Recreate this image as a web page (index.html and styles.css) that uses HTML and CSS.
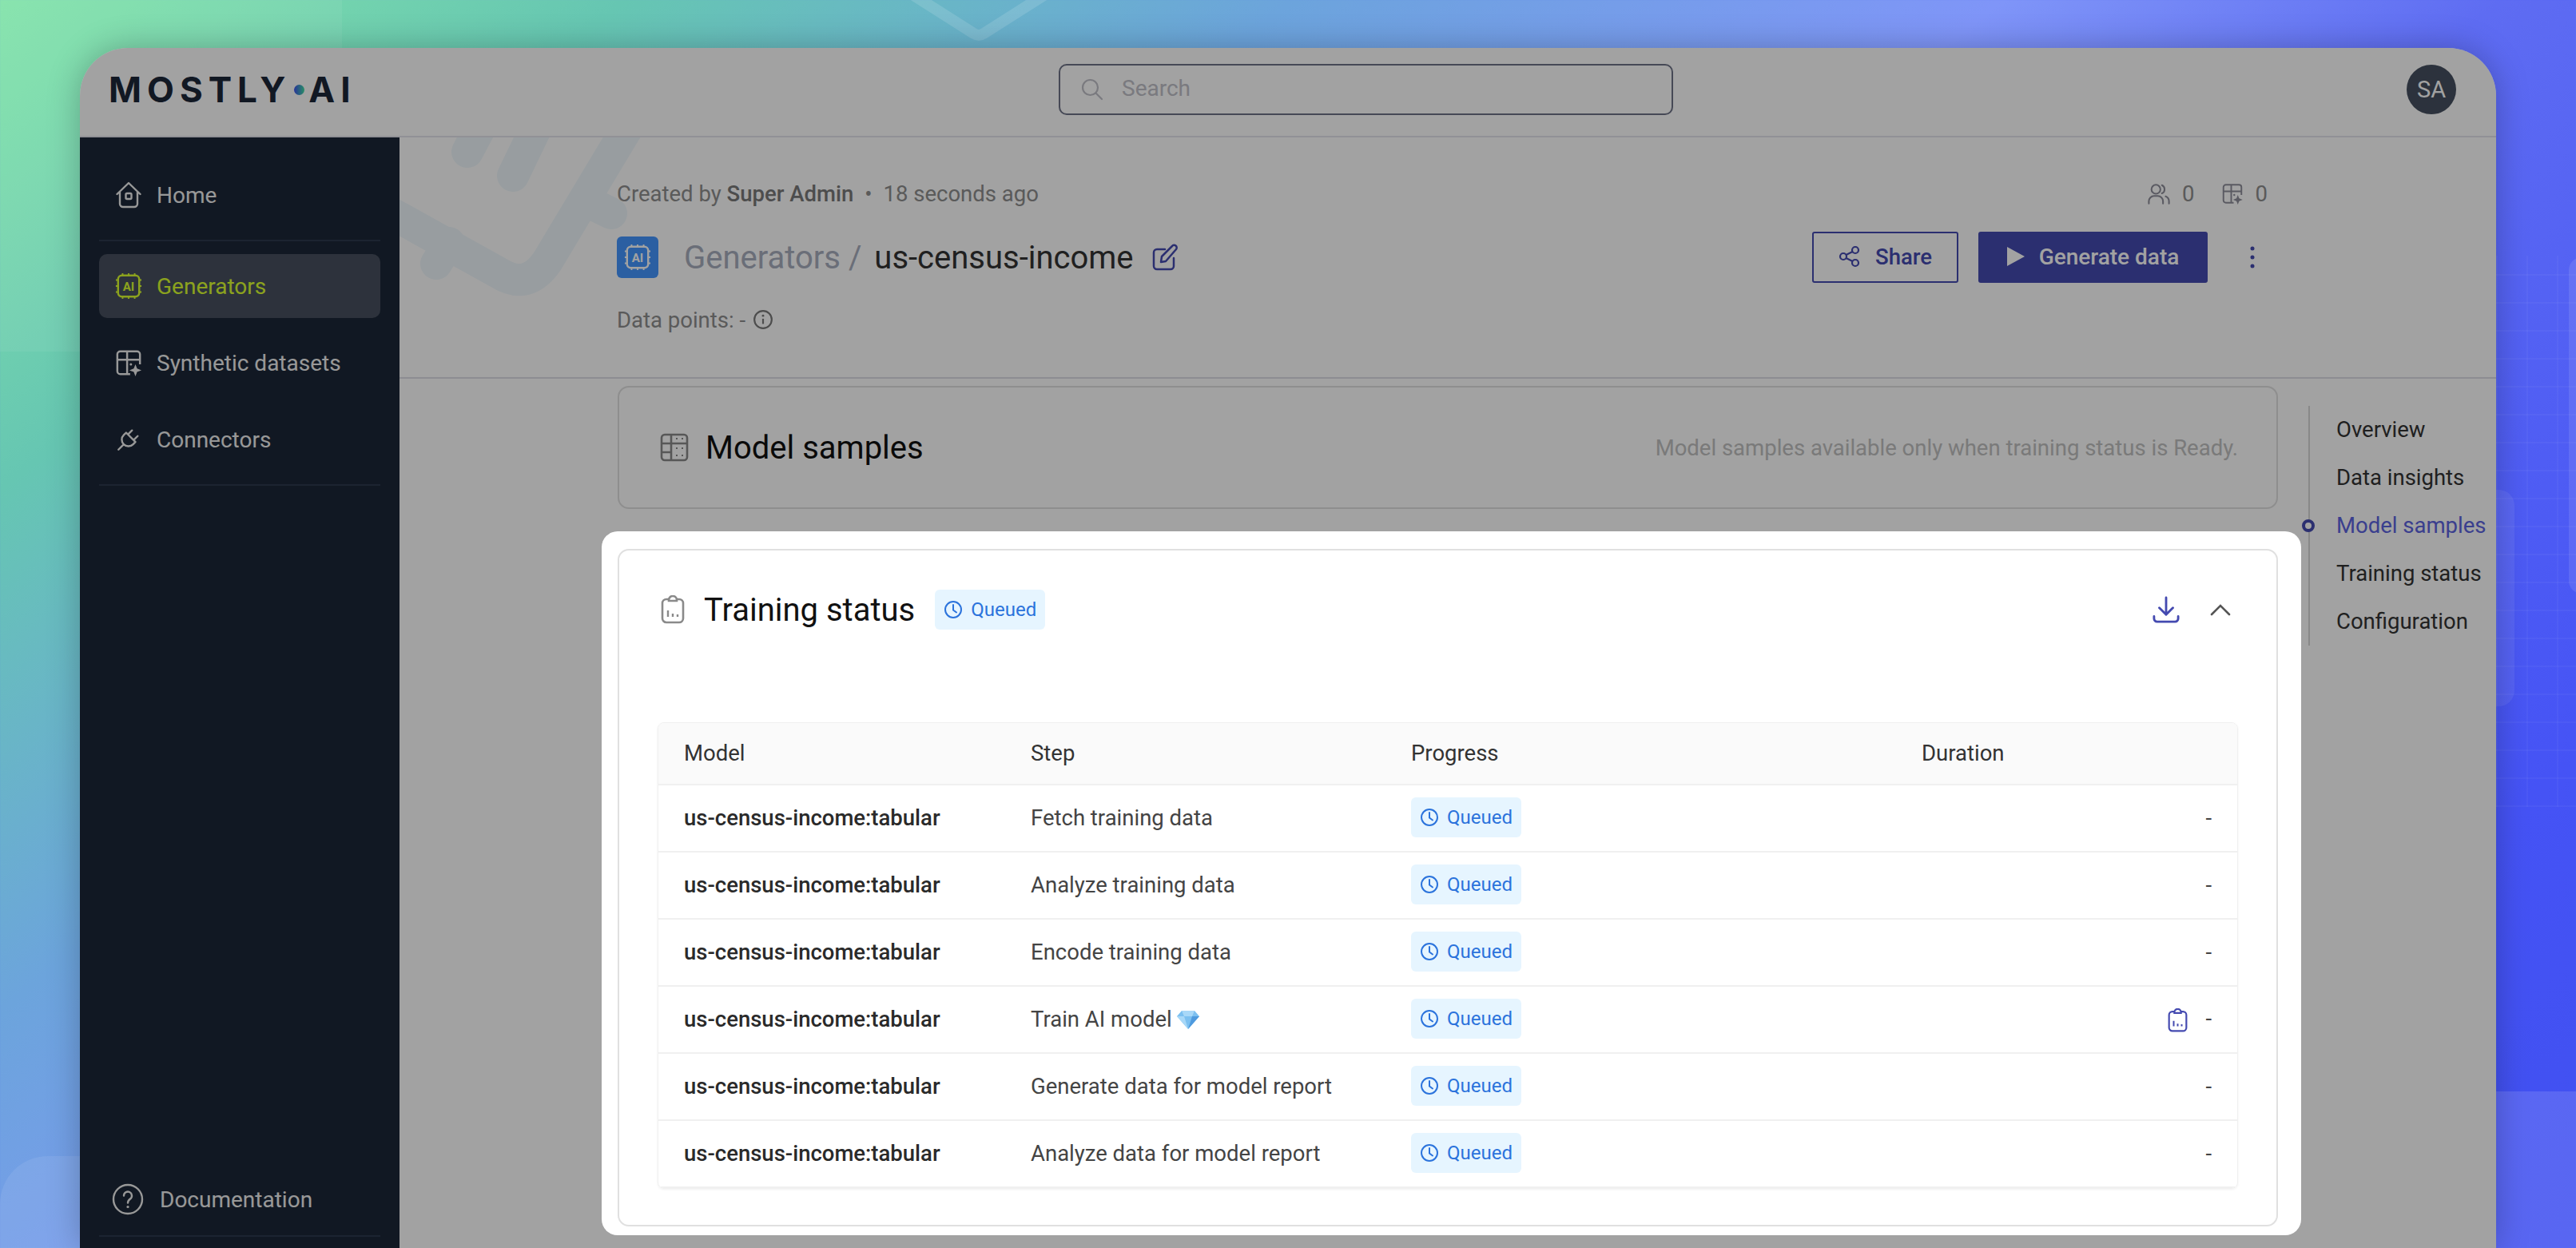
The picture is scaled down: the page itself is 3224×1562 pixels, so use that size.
FILE: index.html
```html
<!DOCTYPE html>
<html lang="en">
<head>
  <meta charset="UTF-8">
  <title>us-census-income - MOSTLY AI</title>
  <link rel="stylesheet" href="styles.css">
</head>
<body>
<!-- shared icons -->
<svg class="icon-defs" width="0" height="0">
  <symbol id="i-home" viewBox="0 0 34 34"><path d="M2.500 16 17 2l14.500 14M6 13.500V28a4 4 0 0 0 4 4h14a4 4 0 0 0 4-4V13.500" fill="none" stroke="currentColor" stroke-width="2.400" stroke-linecap="round" stroke-linejoin="round"/><rect x="13.500" y="15" width="7" height="7" rx="1.500" fill="none" stroke="currentColor" stroke-width="2.400"/></symbol>
  <symbol id="i-table-star" viewBox="0 0 36 36"><path d="M20 33H7a4 4 0 0 1-4-4V7a4 4 0 0 1 4-4h22a4 4 0 0 1 4 4v13M3 14h30M16 3v30" fill="none" stroke="currentColor" stroke-width="2.600"/><path d="M27 20l2.200 5.800L35 28l-5.800 2.200L27 36l-2.200-5.800L19 28l5.800-2.200z" fill="currentColor"/><circle cx="21" cy="20" r="1.600" fill="currentColor"/></symbol>
  <symbol id="i-plug" viewBox="0 0 24 24"><path d="M9.785 6 18 14.215l-2.054 2.054a5.810 5.810 0 1 1-8.215-8.215zM3 21l4.500-4.500M15 4l-3.500 3.500M20 9l-3.500 3.500" fill="none" stroke="currentColor" stroke-width="1.700" stroke-linecap="round" stroke-linejoin="round"/></symbol>
  <symbol id="i-help" viewBox="0 0 40 40"><circle cx="20" cy="20" r="18" fill="none" stroke="currentColor" stroke-width="2.400"/><path d="M15 15.500a5 5 0 1 1 8 4c-2 1.500-3 2.500-3 5" fill="none" stroke="currentColor" stroke-width="2.400" stroke-linecap="round"/><circle cx="20" cy="29.500" r="1.600" fill="currentColor"/></symbol>
  <symbol id="i-search" viewBox="0 0 30 30"><circle cx="12.500" cy="12.500" r="9.500" fill="none" stroke="currentColor" stroke-width="2.200"/><path d="M19.500 19.500 27 27" stroke="currentColor" stroke-width="2.200" stroke-linecap="round"/></symbol>
  <symbol id="i-edit" viewBox="0 0 34 34"><path d="M28 18v10a4 4 0 0 1-4 4H7a4 4 0 0 1-4-4V11a4 4 0 0 1 4-4h10" fill="none" stroke="currentColor" stroke-width="2.500" stroke-linecap="round"/><path d="M12 23l1-7L26 3a3 3 0 0 1 5 4L18 22z" fill="none" stroke="currentColor" stroke-width="2.500" stroke-linejoin="round"/></symbol>
  <symbol id="i-info" viewBox="0 0 24 24"><circle cx="12" cy="12" r="10" fill="none" stroke="currentColor" stroke-width="2"/><path d="M12 11v6" stroke="currentColor" stroke-width="2"/><circle cx="12" cy="7.500" r="1.300" fill="currentColor"/></symbol>
  <symbol id="i-people" viewBox="0 0 30 28"><circle cx="11" cy="8" r="6" fill="none" stroke="currentColor" stroke-width="2.200"/><path d="M1.500 27v-3a7 7 0 0 1 7-7h5a7 7 0 0 1 7 7v3M19 2.500a6 6 0 0 1 0 11M24 17.500a7 7 0 0 1 4.500 6.500v3" fill="none" stroke="currentColor" stroke-width="2.200" stroke-linecap="round"/></symbol>
  <symbol id="i-share" viewBox="0 0 28 28"><circle cx="6" cy="14" r="4" fill="none" stroke="currentColor" stroke-width="2.200"/><circle cx="21" cy="6" r="4" fill="none" stroke="currentColor" stroke-width="2.200"/><circle cx="21" cy="22" r="4" fill="none" stroke="currentColor" stroke-width="2.200"/><path d="M9.500 12 17.500 8M9.500 16l8 4" stroke="currentColor" stroke-width="2.200"/></symbol>
  <symbol id="i-dots" viewBox="0 0 8 32"><circle cx="4" cy="5" r="2.500" fill="currentColor"/><circle cx="4" cy="16" r="2.500" fill="currentColor"/><circle cx="4" cy="27" r="2.500" fill="currentColor"/></symbol>
  <symbol id="i-grid" viewBox="0 0 36 36"><rect x="2" y="2" width="32" height="32" rx="4" fill="none" stroke="currentColor" stroke-width="2.600"/><path d="M2 13h32M14 2v32M2 24h12" stroke="currentColor" stroke-width="2.600"/><path d="M20 7h2M27 7h2M20 19h2M27 19h2M20 28h2M27 28h2" stroke="currentColor" stroke-width="2.200"/></symbol>
  <symbol id="i-clip" viewBox="0 0 30 36"><rect x="2" y="5" width="26" height="29" rx="5" fill="none" stroke="currentColor" stroke-width="2.600"/><path d="M10 6a5 5 0 0 1 10 0v1H10z" fill="#fff" stroke="currentColor" stroke-width="2.600"/><path d="M9 27v-8M15 27v-4M21 27v-3" stroke="currentColor" stroke-width="2.400"/></symbol>
  <symbol id="i-clock" viewBox="0 0 24 24"><circle cx="12" cy="12" r="10" fill="none" stroke="currentColor" stroke-width="2"/><path d="M12 6v6.500l4 3" fill="none" stroke="currentColor" stroke-width="2" stroke-linecap="round"/></symbol>
  <symbol id="i-download" viewBox="0 0 36 36"><path d="M18 2v22M9 15.500 18 24.500l9-9M2 27v3a4 4 0 0 0 4 4h24a4 4 0 0 0 4-4v-3" fill="none" stroke="currentColor" stroke-width="3" stroke-linecap="round" stroke-linejoin="round"/></symbol>
  <symbol id="i-chevron" viewBox="0 0 26 16"><path d="M2 14 13 3l11 11" fill="none" stroke="currentColor" stroke-width="2.600" stroke-linecap="round"/></symbol>
</svg>

<!-- backdrop decoration -->
<div class="deco deco-panel-a"></div>
<div class="deco deco-panel-b"></div>
<div class="deco deco-panel-c"></div>
<div class="deco deco-panel-d"></div>
<div class="deco deco-panel-e"></div>
<div class="deco deco-grid"></div>
<svg class="deco deco-vee" viewBox="0 0 180 60"><path d="M2 -10 84 42q6 4 12 0L178 -10" fill="none" stroke="#fff" stroke-opacity=".13" stroke-width="14"/></svg>

<div class="window">
  <header class="topbar">
    <div class="logo"><span>MOSTLY</span><i class="logo-dot"></i><span>AI</span></div>
    <div class="search">
      <svg class="search-icon"><use href="#i-search"/></svg>
      <span class="search-text">Search</span>
    </div>
    <div class="avatar">SA</div>
  </header>

  <div class="layout">
    <nav class="sidebar">
      <a class="nav-item"><svg class="nav-icon"><use href="#i-home"/></svg>Home</a>
      <div class="nav-rule"></div>
      <a class="nav-item active">
        <svg class="nav-icon" viewBox="0 0 36 36"><rect x="4" y="4" width="28" height="28" rx="5" fill="none" stroke="currentColor" stroke-width="2.600"/><path d="M10 1v3M18 1v3M26 1v3M10 32v3M18 32v3M26 32v3M1 10h3M1 18h3M1 26h3M32 10h3M32 18h3M32 26h3" stroke="currentColor" stroke-width="2"/><text x="18" y="24" text-anchor="middle" class="chip-text" fill="currentColor">AI</text></svg>
        Generators
      </a>
      <a class="nav-item"><svg class="nav-icon"><use href="#i-table-star"/></svg>Synthetic datasets</a>
      <a class="nav-item"><svg class="nav-icon"><use href="#i-plug"/></svg>Connectors</a>
      <div class="nav-rule"></div>
      <a class="nav-doc"><svg class="doc-icon"><use href="#i-help"/></svg>Documentation</a>
      <div class="nav-rule nav-rule-end"></div>
    </nav>

    <main class="main">
      <svg class="main-deco" viewBox="0 0 320 230">
        <path d="M-10 95 125 170q35 22 60-15L290 -20M46 158 62 132M265 95 238 82M85 18 105 -20M142 48 170 -10" fill="none" stroke="#eff8fc" stroke-width="40" stroke-linecap="round"/>
      </svg>

      <section class="page-head">
        <div class="head-top">
          <p class="created">Created by <b>Super Admin</b><span class="sep">•</span>18 seconds ago</p>
          <div class="counts">
            <svg class="count-icon"><use href="#i-people"/></svg><span>0</span>
            <svg class="count-icon second"><use href="#i-table-star"/></svg><span>0</span>
          </div>
        </div>
        <div class="head-title">
          <span class="tile">
            <svg class="tile-icon" viewBox="0 0 36 36"><rect x="4" y="4" width="28" height="28" rx="5" fill="none" stroke="currentColor" stroke-width="2.600"/><path d="M10 1v3M18 1v3M26 1v3M10 32v3M18 32v3M26 32v3M1 10h3M1 18h3M1 26h3M32 10h3M32 18h3M32 26h3" stroke="currentColor" stroke-width="2"/><text x="18" y="24" text-anchor="middle" class="chip-text" fill="currentColor">AI</text></svg>
          </span>
          <h1><span class="crumb">Generators /</span> us-census-income</h1>
          <svg class="edit-icon"><use href="#i-edit"/></svg>
          <div class="actions">
            <button class="btn btn-outline"><svg class="btn-icon"><use href="#i-share"/></svg>Share</button>
            <button class="btn btn-solid"><span class="play"></span>Generate data</button>
            <svg class="dots"><use href="#i-dots"/></svg>
          </div>
        </div>
        <p class="data-points">Data points: - <svg class="info-icon"><use href="#i-info"/></svg></p>
      </section>

      <div class="page-body">
        <div class="content">
          <section class="card card-samples">
            <svg class="card-icon"><use href="#i-grid"/></svg>
            <h2>Model samples</h2>
            <p class="card-note">Model samples available only when training status is Ready.</p>
          </section>

          <div class="spotlight">
            <section class="card card-training">
              <div class="training-head">
                <svg class="card-icon clip"><use href="#i-clip"/></svg>
                <h2>Training status</h2>
                <span class="badge"><svg class="clock"><use href="#i-clock"/></svg>Queued</span>
                <svg class="download"><use href="#i-download"/></svg>
                <svg class="chevron"><use href="#i-chevron"/></svg>
              </div>
              <div class="table-wrap">
                <table class="steps">
                  <thead>
                    <tr><th class="col-model">Model</th><th class="col-step">Step</th><th class="col-progress">Progress</th><th>Duration</th></tr>
                  </thead>
                  <tbody>
                    <tr>
                      <td class="model">us-census-income:tabular</td><td>Fetch training data</td>
                      <td><span class="badge"><svg class="clock"><use href="#i-clock"/></svg>Queued</span></td>
                      <td class="duration">-</td>
                    </tr>
                    <tr>
                      <td class="model">us-census-income:tabular</td><td>Analyze training data</td>
                      <td><span class="badge"><svg class="clock"><use href="#i-clock"/></svg>Queued</span></td>
                      <td class="duration">-</td>
                    </tr>
                    <tr>
                      <td class="model">us-census-income:tabular</td><td>Encode training data</td>
                      <td><span class="badge"><svg class="clock"><use href="#i-clock"/></svg>Queued</span></td>
                      <td class="duration">-</td>
                    </tr>
                    <tr>
                      <td class="model">us-census-income:tabular</td>
                      <td>Train AI model <svg class="gem" viewBox="0 0 28 24"><path d="M6 1h16l6 7-14 16L0 8z" fill="#7cc0f0"/><path d="M6 1h16l-3 7H9zM0 8h9l5 16z" fill="#a8d8f8"/><path d="M19 8h9L14 24z" fill="#4f9ade"/></svg></td>
                      <td><span class="badge"><svg class="clock"><use href="#i-clock"/></svg>Queued</span></td>
                      <td class="duration"><svg class="row-clip"><use href="#i-clip"/></svg>-</td>
                    </tr>
                    <tr>
                      <td class="model">us-census-income:tabular</td><td>Generate data for model report</td>
                      <td><span class="badge"><svg class="clock"><use href="#i-clock"/></svg>Queued</span></td>
                      <td class="duration">-</td>
                    </tr>
                    <tr>
                      <td class="model">us-census-income:tabular</td><td>Analyze data for model report</td>
                      <td><span class="badge"><svg class="clock"><use href="#i-clock"/></svg>Queued</span></td>
                      <td class="duration">-</td>
                    </tr>
                  </tbody>
                </table>
              </div>
            </section>
          </div>
        </div>

        <ul class="toc">
          <li>Overview</li>
          <li>Data insights</li>
          <li class="current">Model samples</li>
          <li>Training status</li>
          <li>Configuration</li>
        </ul>
      </div>
    </main>
  </div>
</div>
</body>
</html>
```

FILE: styles.css
```css
* {
  margin: 0;
  padding: 0;
  box-sizing: border-box;
}

html, body {
  height: 1562px;
  overflow: hidden;
}

body {
  padding: 60px 100px 0;
  font-family: Roboto, "Liberation Sans", sans-serif;
  background: linear-gradient(142deg, #82e3a9 0%, #66c6b2 15%, #6ca4dc 31%, #7f95f8 48%, #5e6cf2 60%, #4553f5 85%, #4050f0 100%);
}

.icon-defs {
  position: absolute;
}

.chip-text {
  font: 700 16px Roboto, sans-serif;
}

/* backdrop */
.deco {
  position: absolute;
}

.deco-panel-a {
  left: 0;
  top: 0;
  width: 428px;
  height: 440px;
  background: rgba(255, 255, 255, .06);
}

.deco-panel-b {
  left: 0;
  top: 1447px;
  width: 100px;
  height: 115px;
  border-radius: 60px 0 0 0;
  background: rgba(255, 255, 255, .08);
}

.deco-panel-c {
  left: 3215px;
  top: 322px;
  width: 40px;
  height: 421px;
  border-radius: 16px;
  background: rgba(255, 255, 255, .1);
}

.deco-panel-d {
  left: 3090px;
  top: 613px;
  width: 57px;
  height: 271px;
  border-radius: 20px;
  background: rgba(255, 255, 255, .07);
}

.deco-panel-e {
  left: 3124px;
  top: 1366px;
  width: 100px;
  height: 196px;
  background: rgba(255, 255, 255, .13);
}

.deco-grid {
  left: 3124px;
  top: 320px;
  width: 100px;
  height: 690px;
  background:
    repeating-linear-gradient(0deg, rgba(255, 255, 255, .035) 0 2px, transparent 2px 35px),
    repeating-linear-gradient(90deg, rgba(255, 255, 255, .035) 0 2px, transparent 2px 38px);
}

.deco-vee {
  left: 1135px;
  top: 0;
  width: 180px;
  height: 60px;
}

/* app window */
.window {
  position: relative;
  isolation: isolate;
  display: flex;
  flex-direction: column;
  height: 1502px;
  overflow: hidden;
  border-radius: 60px 60px 0 0;
  background: #fff;
  box-shadow: 0 0 40px rgba(0, 0, 0, .25);
}

.topbar {
  display: flex;
  align-items: center;
  flex: none;
  height: 112px;
  padding: 0 50px 6px 36px;
  border-bottom: 2px solid #e4e4ec;
}

.logo {
  display: flex;
  align-items: center;
  width: 1189px;
  font: 700 44px Inter, sans-serif;
  letter-spacing: 7px;
  color: #1c2737;
}

.logo-dot {
  width: 13px;
  height: 13px;
  margin: 0 5px 0 4px;
  border-radius: 50%;
  background: linear-gradient(90deg, #3f51f0, #3fe0a0);
}

.search {
  display: flex;
  align-items: center;
  width: 769px;
  height: 64px;
  padding-left: 25px;
  border: 2px solid #6f7488;
  border-radius: 10px;
  font-size: 28px;
  color: #c0c0c8;
}

.search-icon {
  width: 30px;
  height: 30px;
  margin-right: 22px;
}

.search-text {
  padding-bottom: 3px;
}

.avatar {
  display: flex;
  align-items: center;
  justify-content: center;
  width: 62px;
  height: 62px;
  margin-left: auto;
  border-radius: 50%;
  background: #465060;
  color: #fff;
  font-size: 29px;
}

.layout {
  display: flex;
  flex: 1;
  min-height: 0;
}

/* sidebar */
.sidebar {
  display: flex;
  flex-direction: column;
  flex: none;
  width: 400px;
  padding: 32px 24px 14px;
  background: #1c2737;
  color: #fff;
}

.nav-item {
  display: flex;
  align-items: center;
  flex: none;
  height: 80px;
  padding-left: 20px;
  border-radius: 10px;
  font-size: 28px;
  color: #f0f0f0;
}

.nav-item + .nav-item {
  margin-top: 16px;
}

.nav-item.active {
  background: #47505f;
  color: #dcff30;
}

.nav-icon {
  flex: none;
  width: 34px;
  height: 36px;
  margin-right: 18px;
}

.nav-rule {
  flex: none;
  height: 2px;
  margin: 16px 0;
  background: #2d3a4d;
}

.nav-rule + .nav-item {
  margin-top: 0;
}

.nav-doc {
  display: flex;
  align-items: center;
  margin-top: auto;
  padding-left: 16px;
  font-size: 28px;
  color: #f0f0f0;
}

.doc-icon {
  width: 40px;
  height: 40px;
  margin-right: 20px;
}

.nav-rule-end {
  margin: 25px 0 0;
}

/* main column */
.main {
  position: relative;
  flex: 1;
  min-width: 0;
}

.main-deco {
  position: absolute;
  left: 0;
  top: 0;
  z-index: -1;
  width: 320px;
  height: 230px;
}

.page-head {
  height: 302px;
  padding: 54px 281px 0 272px;
  border-bottom: 2px solid #dcdce6;
}

.head-top {
  display: flex;
  align-items: center;
  height: 32px;
  font-size: 27.5px;
  color: #8e8e8e;
}

.created b {
  font-weight: 500;
  color: #7a7a7a;
}

.sep {
  margin: 0 14px;
}

.counts {
  display: flex;
  align-items: center;
  gap: 15px;
  margin-left: auto;
  margin-right: 5px;
}

.count-icon {
  width: 28px;
  height: 27px;
  color: #8e8e9a;
}

.count-icon.second {
  margin-left: 18px;
}

.head-title {
  display: flex;
  align-items: center;
  height: 64px;
  margin-top: 32px;
}

.tile {
  display: flex;
  align-items: center;
  justify-content: center;
  width: 52px;
  height: 52px;
  margin-right: 32px;
  border-radius: 6px;
  background: #4496ff;
  color: #fff;
}

.tile-icon {
  width: 34px;
  height: 34px;
}

h1 {
  font-size: 40px;
  font-weight: 400;
  color: #333;
}

.crumb {
  margin-right: 6px;
  color: #a7adbd;
}

.edit-icon {
  width: 34px;
  height: 34px;
  margin-left: 22px;
  color: #444ab0;
}

.actions {
  display: flex;
  align-items: center;
  margin-left: auto;
}

.btn {
  display: flex;
  align-items: center;
  justify-content: center;
  height: 64px;
  padding-bottom: 2px;
  border-radius: 3px;
  font: 500 27.5px Roboto, sans-serif;
}

.btn-outline {
  width: 183px;
  margin-right: 25px;
  border: 2px solid #444ab0;
  background: transparent;
  color: #444ab0;
}

.btn-icon {
  width: 28px;
  height: 28px;
  margin-right: 18px;
}

.btn-solid {
  width: 287px;
  border: 0;
  background: #444ab0;
  color: #fff;
  font-size: 28px;
}

.play {
  width: 0;
  height: 0;
  margin-right: 18px;
  border-left: 22px solid #fff;
  border-top: 12px solid transparent;
  border-bottom: 12px solid transparent;
}

.dots {
  width: 8px;
  height: 32px;
  margin: 0 20px 0 52px;
  color: #444ab0;
}

.data-points {
  display: flex;
  align-items: center;
  gap: 9px;
  height: 28px;
  margin-top: 32px;
  font-size: 27.5px;
  color: #8e8e8e;
}

.info-icon {
  width: 26px;
  height: 26px;
  color: #7a7a7a;
}

/* body */
.page-body {
  display: flex;
  padding: 9px 0 0 273px;
}

.content {
  flex: none;
  width: 2078px;
}

.card {
  border: 2px solid #e0e0e0;
  border-radius: 14px;
  background: #fff;
}

.main .card-samples {
  background: transparent;
}

.card-samples {
  display: flex;
  align-items: center;
  height: 154px;
  padding: 0 48px 0 51px;
}

.card-icon {
  flex: none;
  width: 36px;
  height: 36px;
  margin-right: 21px;
  color: #8a8a8a;
}

.card-icon.clip {
  width: 30px;
  margin: 0 24px 0 4px;
}

h2 {
  font-size: 40px;
  font-weight: 400;
  color: #111;
}

.card-note {
  margin-left: auto;
  font-size: 27.5px;
  color: #c0c0c0;
}

.spotlight {
  position: relative;
  z-index: 1;
  margin: 28px -29px 0 -20px;
  padding: 22px 29px 11px 20px;
  border-radius: 20px;
  background: #fff;
  box-shadow: 0 0 0 4000px rgba(0, 0, 0, .365);
}

.card-training {
  height: 848px;
  padding: 49px 48px 0;
}

.training-head {
  display: flex;
  align-items: center;
  height: 50px;
  margin-bottom: 116px;
}

.badge {
  display: inline-flex;
  align-items: center;
  width: 138px;
  height: 50px;
  padding-left: 11px;
  border-radius: 6px;
  background: #e6f5ff;
  color: #2b73dc;
  font-size: 24px;
}

.training-head .badge {
  margin-left: 25px;
}

.clock {
  width: 24px;
  height: 24px;
  margin-right: 10px;
}

.download {
  width: 34px;
  height: 34px;
  margin-left: auto;
  margin-right: 38px;
  color: #444ab0;
}

.chevron {
  width: 26px;
  height: 16px;
  margin-right: 9px;
  color: #555;
}

.table-wrap {
  overflow: hidden;
  border: 1px solid #f0f0f0;
  border-radius: 8px;
  box-shadow: 0 1px 3px rgba(0, 0, 0, .06);
}

.steps {
  width: 100%;
  table-layout: fixed;
  border-collapse: collapse;
  font-size: 27.5px;
  color: #444;
}

.steps th {
  height: 77px;
  padding: 0 0 2px 32px;
  border-bottom: 2px solid #f0f0f0;
  background: #fafafa;
  font-weight: 400;
  text-align: left;
  color: #333;
}

.col-model {
  width: 434px;
}

.col-step {
  width: 476px;
}

.col-progress {
  width: 639px;
}

.steps td {
  height: 84px;
  padding: 0 0 2px 32px;
  border-bottom: 2px solid #f0f0f0;
}

.steps td.model {
  font-weight: 500;
  color: #2a2a2a;
}

.steps td.duration {
  padding-right: 32px;
  text-align: right;
}

.gem {
  width: 28px;
  height: 24px;
  vertical-align: -3px;
}

.row-clip {
  width: 25px;
  height: 30px;
  margin-right: 22px;
  vertical-align: middle;
  color: #444ab0;
}

/* page outline */
.toc {
  flex: none;
  height: 300px;
  margin: 25px 0 0 38px;
  border-left: 2px solid #d6d6d6;
  list-style: none;
  font-size: 27.5px;
  color: #333;
}

.toc li {
  position: relative;
  height: 60px;
  padding-left: 33px;
  line-height: 60px;
  white-space: nowrap;
}

.toc li.current {
  color: #5c63e0;
}

.toc li.current::before {
  content: "";
  position: absolute;
  left: -10px;
  top: 22px;
  width: 8px;
  height: 8px;
  border: 4px solid #444ab0;
  border-radius: 50%;
  background: #fff;
}
```
